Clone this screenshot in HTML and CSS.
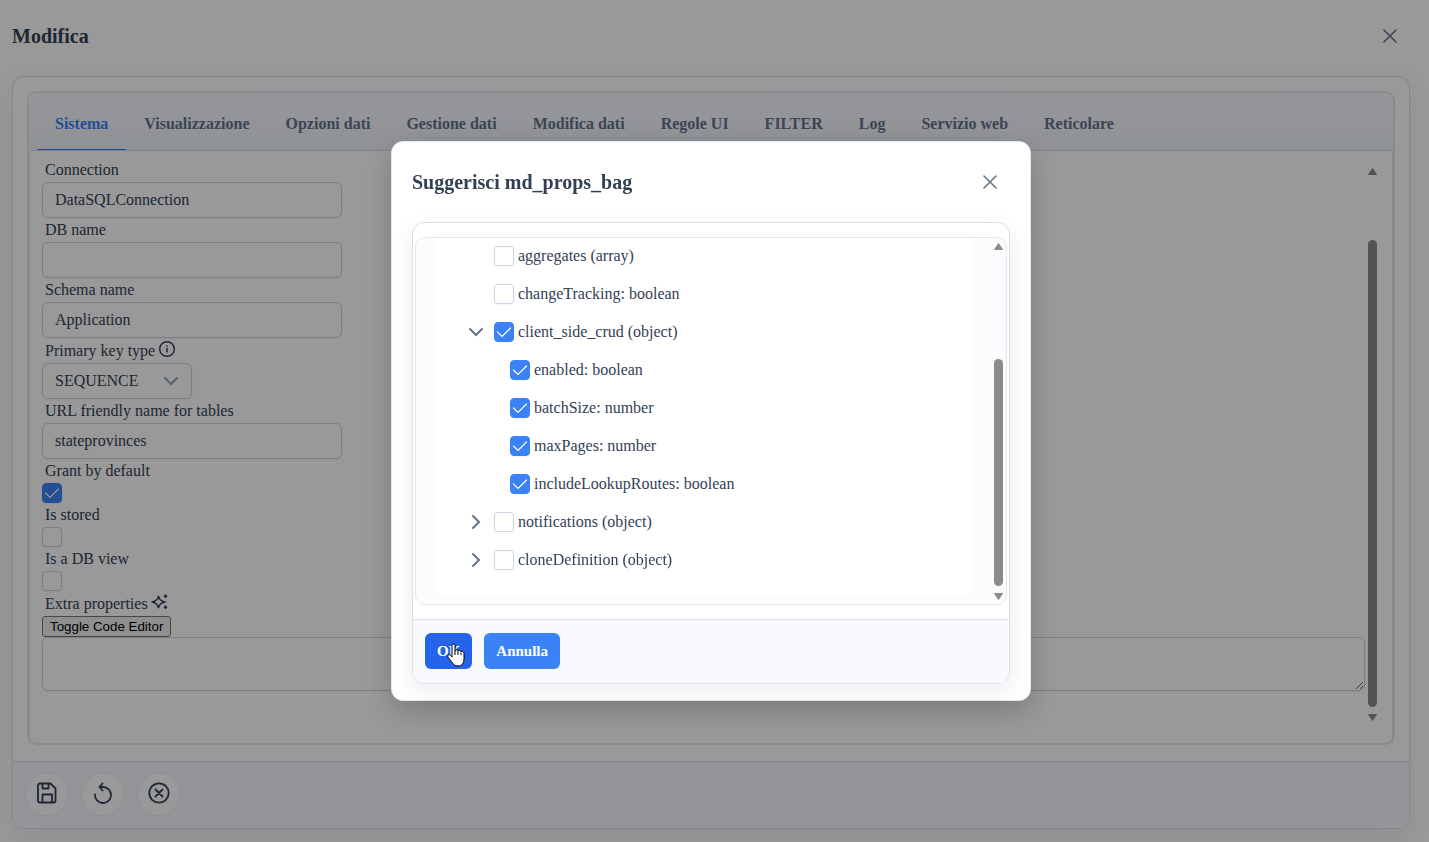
FILE: index.html
```html
<!DOCTYPE html>
<html lang="it">
  <head>
    <meta charset="UTF-8" />
    <title>Modifica</title>
    <link rel="stylesheet" href="styles.css">
  </head>
  <body>
    <div class="page">
      <header class="page-header">
        <h1>Modifica</h1>
        <button class="close-btn" aria-label="Chiudi">
          <svg width="14" height="14" viewBox="0 0 14 14"><path d="M1 1L13 13M13 1L1 13" /></svg>
        </button>
      </header>

      <main class="panel">
        <div class="panel-body">
          <div class="tabs">
            <nav class="tab-list">
              <a class="tab active" href="#sistema">Sistema</a>
              <a class="tab" href="#visualizzazione">Visualizzazione</a>
              <a class="tab" href="#opzioni">Opzioni dati</a>
              <a class="tab" href="#gestione">Gestione dati</a>
              <a class="tab" href="#modifica">Modifica dati</a>
              <a class="tab" href="#regole">Regole UI</a>
              <a class="tab" href="#filter">FILTER</a>
              <a class="tab" href="#log">Log</a>
              <a class="tab" href="#servizio">Servizio web</a>
              <a class="tab" href="#reticolare">Reticolare</a>
            </nav>

            <div class="tab-content">
              <form class="fields">
                <label for="connection">Connection</label>
                <input id="connection" class="text-input" type="text" value="DataSQLConnection" />

                <label for="db-name">DB name</label>
                <input id="db-name" class="text-input" type="text" />

                <label for="schema-name">Schema name</label>
                <input id="schema-name" class="text-input" type="text" value="Application" />

                <label class="with-icon" for="pk-type">
                  Primary key type
                  <svg width="18" height="18" viewBox="0 0 18 18"><circle cx="9" cy="9" r="7.3" /><path d="M9 8V12.500M9 5.500V6.800" /></svg>
                </label>
                <select id="pk-type" class="select">
                  <option>SEQUENCE</option>
                </select>

                <label for="url-name">URL friendly name for tables</label>
                <input id="url-name" class="text-input" type="text" value="stateprovinces" />

                <label for="grant">Grant by default</label>
                <input id="grant" class="checkbox" type="checkbox" checked />

                <label for="stored">Is stored</label>
                <input id="stored" class="checkbox" type="checkbox" />

                <label for="db-view">Is a DB view</label>
                <input id="db-view" class="checkbox" type="checkbox" />

                <label class="with-icon" for="extra">
                  Extra properties
                  <svg width="18" height="18" viewBox="0 0 18 18"><path d="M7.500 3C8.200 6.600 9.400 7.800 13.500 9C9.400 10.200 8.200 11.400 7.500 15C6.800 11.400 5.600 10.200 1.500 9C5.600 7.800 6.800 6.600 7.500 3ZM14.500 1.500V5M12.800 3.200H16.200M14.500 12.500V16M12.800 14.200H16.200" /></svg>
                </label>
                <button class="toggle-btn" type="button">Toggle Code Editor</button>
                <textarea id="extra" class="extra"></textarea>
              </form>

              <div class="scrollbar">
                <svg width="9" height="7" viewBox="0 0 9 7"><path d="M4.5 0.5L8.5 6.5H0.5Z" /></svg>
                <div class="track"><div class="thumb thumb-page"></div></div>
                <svg width="9" height="7" viewBox="0 0 9 7"><path d="M4.5 6.5L8.5 0.5H0.5Z" /></svg>
              </div>
            </div>
          </div>
        </div>

        <footer class="panel-footer">
          <button class="round-btn" aria-label="Salva">
            <svg width="22" height="22" viewBox="0 0 22 22"><path d="M4 1.500H14.500L19.500 6.500V18.500Q19.500 20.500 17.500 20.500H4Q2 20.500 2 18.500V3.500Q2 1.500 4 1.500ZM6.500 1.500V6.500H12.500V1.500M6.500 20.500V12.500H16V20.500" /></svg>
          </button>
          <button class="round-btn" aria-label="Ripristina">
            <svg width="22" height="22" viewBox="0 0 22 22"><path d="M3 12.500A8 8 0 1 0 11 5H7.500M10.500 1.500L7.500 5L10.500 8.500" /></svg>
          </button>
          <button class="round-btn" aria-label="Annulla modifiche">
            <svg width="22" height="22" viewBox="0 0 22 22"><circle cx="11" cy="11" r="9.700" /><path d="M7.500 7.500L14.500 14.500M14.500 7.500L7.500 14.500" /></svg>
          </button>
        </footer>
      </main>
    </div>

    <div class="overlay">
      <section class="dialog" role="dialog" aria-labelledby="dialog-title">
        <header class="dialog-header">
          <h2 id="dialog-title">Suggerisci md_props_bag</h2>
          <button class="close-btn" aria-label="Chiudi">
            <svg width="14" height="14" viewBox="0 0 14 14"><path d="M1 1L13 13M13 1L1 13" /></svg>
          </button>
        </header>

        <div class="dialog-panel">
          <div class="tree-box">
            <ul class="tree">
              <li><span class="toggler"></span><input id="n1" class="checkbox" type="checkbox" /><label for="n1">aggregates (array)</label></li>
              <li><span class="toggler"></span><input id="n2" class="checkbox" type="checkbox" /><label for="n2">changeTracking: boolean</label></li>
              <li>
                <button class="toggler" aria-label="Comprimi"><svg width="16" height="16" viewBox="0 0 16 16"><path d="M2 5L8 11L14 5" /></svg></button>
                <input id="n3" class="checkbox" type="checkbox" checked /><label for="n3">client_side_crud (object)</label>
              </li>
              <li class="child"><input id="n4" class="checkbox" type="checkbox" checked /><label for="n4">enabled: boolean</label></li>
              <li class="child"><input id="n5" class="checkbox" type="checkbox" checked /><label for="n5">batchSize: number</label></li>
              <li class="child"><input id="n6" class="checkbox" type="checkbox" checked /><label for="n6">maxPages: number</label></li>
              <li class="child"><input id="n7" class="checkbox" type="checkbox" checked /><label for="n7">includeLookupRoutes: boolean</label></li>
              <li>
                <button class="toggler" aria-label="Espandi"><svg width="16" height="16" viewBox="0 0 16 16"><path d="M5 2L11 8L5 14" /></svg></button>
                <input id="n8" class="checkbox" type="checkbox" /><label for="n8">notifications (object)</label>
              </li>
              <li>
                <button class="toggler" aria-label="Espandi"><svg width="16" height="16" viewBox="0 0 16 16"><path d="M5 2L11 8L5 14" /></svg></button>
                <input id="n9" class="checkbox" type="checkbox" /><label for="n9">cloneDefinition (object)</label>
              </li>
            </ul>

            <div class="scrollbar">
              <svg width="9" height="7" viewBox="0 0 9 7"><path d="M4.5 0.5L8.5 6.5H0.5Z" /></svg>
              <div class="track"><div class="thumb thumb-tree"></div></div>
              <svg width="9" height="7" viewBox="0 0 9 7"><path d="M4.5 6.5L8.5 0.5H0.5Z" /></svg>
            </div>
          </div>

          <footer class="dialog-footer">
            <button class="btn btn-hover">OK
              <svg class="pointer" width="18" height="24" viewBox="0 0 18 24"><path d="M5 14V2.500C5 0.500 8 0.500 8 2.500V8C8 6.300 11 6.300 11 8.300C11 6.800 14 7 14 9C14 7.800 17 8 17 10.200V15.500C17 20 15 23 11 23C7.500 23 6 21 4.500 18.500L1 14.200C0 12 2.500 10.800 3.800 12.500Z" /><path d="M8 8V12M11 8.500V12M14 9.500V12" /></svg>
            </button>
            <button class="btn">Annulla</button>
          </footer>
        </div>
      </section>
    </div>
  </body>
</html>
```

FILE: styles.css
```css
* {
  box-sizing: border-box;
}
body {
  margin: 0;
  font-family: "Liberation Serif", "Times New Roman", serif;
  font-size: 16px;
  color: #334155;
  background: #fff;
}
input,
select,
textarea,
.btn {
  font-family: inherit;
  font-size: 16px;
  color: inherit;
}
h1,
h2 {
  margin: 0;
}
svg {
  fill: none;
  stroke: currentColor;
}

/* page */
.page {
  display: flex;
  flex-direction: column;
  min-height: 100vh;
  padding: 0 19px 13px 12px;
}
.page-header {
  display: flex;
  align-items: center;
  justify-content: space-between;
  height: 76px;
  padding: 0 12px 4px 0;
}
.page-header h1,
.dialog-header h2 {
  font-size: 20px;
}
.close-btn {
  display: flex;
  padding: 1px;
  border: 0;
  background: none;
  color: #64748b;
}
.close-btn svg {
  stroke-width: 1.6;
  stroke-linecap: round;
}
.panel {
  flex: 1;
  display: flex;
  flex-direction: column;
  border: 1px solid #d9dfec;
  border-radius: 12px;
  box-shadow: 0 8px 24px rgba(0, 20, 10, 0.08);
}
.panel-body {
  flex: 1;
  display: flex;
  padding: 14px 14px 16px;
}
.tabs {
  flex: 1;
  display: flex;
  flex-direction: column;
  border: 2px solid #e2e8f0;
  border-radius: 10px;
}
.tab-list {
  display: flex;
  height: 58px;
  padding: 0 8px;
  border-bottom: 1px solid #d3dae8;
  border-radius: 8px 8px 0 0;
  background: linear-gradient(#fafbff, #f0f4fa);
}
.tab {
  display: flex;
  align-items: center;
  padding: 6px 18px 0;
  border-bottom: 1px solid transparent;
  color: #64748b;
  font-weight: bold;
  text-decoration: none;
}
.tab.active {
  color: #3b82f6;
  border-color: #3b82f6;
}
.tab-content {
  flex: 1;
  display: flex;
  justify-content: space-between;
  padding: 7px 15px 0 12px;
  border: solid #e2e8f0;
  border-width: 0 1px;
}
.fields {
  flex: 1;
  display: flex;
  flex-direction: column;
  align-items: flex-start;
}
.fields label {
  height: 24px;
  padding-left: 3px;
  line-height: 24px;
}
.fields label.with-icon {
  display: flex;
  gap: 3px;
  height: 25px;
  line-height: 26px;
}
.with-icon svg {
  margin-top: 2px;
  stroke-width: 1.5;
}
.text-input,
.select,
.extra {
  width: 300px;
  height: 36px;
  padding: 0 12px;
  border: 1px solid #cbd5e1;
  border-radius: 6px;
  background: #fff;
  box-shadow: 0 1px 2px rgba(18, 18, 23, 0.05);
}
.select {
  appearance: none;
  width: 150px;
  padding-bottom: 1px;
  background: #fff url("data:image/svg+xml,%3Csvg xmlns='http://www.w3.org/2000/svg' width='16' height='16' fill='none' stroke='%2394a3b8' stroke-width='2' stroke-linecap='round'%3E%3Cpath d='M2 5L8 11L14 5'/%3E%3C/svg%3E") no-repeat right 12px center;
}
.toggle-btn {
  height: 21px;
  padding: 0 7px;
  font-family: "Liberation Sans", Arial, sans-serif;
  border: 1px solid #767676;
  border-radius: 3px;
  background: #efefef;
  color: #000;
}
.extra {
  width: 100%;
  height: 54px;
}
.checkbox {
  appearance: none;
  flex: none;
  width: 20px;
  height: 20px;
  margin: 0;
  border: 1px solid #cbd5e1;
  border-radius: 4px;
  background: #fff;
  box-shadow: 0 1px 2px rgba(18, 18, 23, 0.05);
}
.checkbox:checked {
  border-color: #3b82f6;
  background: #3b82f6 url("data:image/svg+xml,%3Csvg xmlns='http://www.w3.org/2000/svg' width='18' height='18' fill='none' stroke='white' stroke-width='1.2' stroke-linecap='round'%3E%3Cpath d='M2.500 9L7 13.500L15.500 5'/%3E%3C/svg%3E") no-repeat center;
}
.panel-footer {
  display: flex;
  align-items: center;
  gap: 12px;
  height: 67px;
  padding: 0 12px 2px;
  border-top: 1px solid #d3dae8;
  border-radius: 0 0 11px 11px;
  background: #f5f8fd;
}
.round-btn {
  display: flex;
  align-items: center;
  justify-content: center;
  width: 44px;
  height: 44px;
  padding: 0 0 2px;
  border: 1px solid #e9edf5;
  border-radius: 50%;
  background: #fff;
  color: #334155;
}
.round-btn svg {
  stroke-width: 1.8;
  stroke-linecap: round;
  stroke-linejoin: round;
}

/* scrollbars */
.scrollbar {
  display: flex;
  flex-direction: column;
  gap: 7px;
  width: 9px;
}
.scrollbar svg {
  fill: #8b8b8b;
  stroke: #8b8b8b;
  stroke-linejoin: round;
}
.track {
  flex: 1;
  display: flex;
  flex-direction: column;
  justify-content: flex-end;
}
.thumb {
  border-radius: 5px;
  background: #8b8b8b;
}
.thumb-page {
  height: 89%;
}
.thumb-tree {
  height: 69%;
}
.tab-content .scrollbar {
  margin: 10px 0 22px 3px;
}

/* dialog */
.overlay {
  position: fixed;
  inset: 0;
  display: flex;
  align-items: center;
  justify-content: center;
  padding-right: 7px;
  background: rgba(0, 0, 0, 0.4);
}
.dialog {
  width: 640px;
  padding: 0 20px 16px;
  border: 1px solid #e2e8f0;
  border-radius: 12px;
  background: #fff;
  box-shadow: 0 10px 30px rgba(0, 0, 0, 0.2);
}
.dialog-header {
  display: flex;
  align-items: center;
  justify-content: space-between;
  height: 80px;
  padding-right: 12px;
}
.dialog-panel {
  border: 1px solid #d9dfec;
  border-radius: 12px;
  box-shadow: 0 8px 24px rgba(0, 20, 10, 0.08);
}
.tree-box {
  display: flex;
  justify-content: space-between;
  margin: 14px 2px;
  padding: 0 3px 10px 22px;
  border: 1px solid #e2e8f0;
  border-radius: 10px;
  background: #fbfcfe;
}
.tree {
  flex: 1;
  margin: 0 24px 0 0;
  padding: 0 0 14px 24px;
  list-style: none;
  background: #fff;
}
.tree li {
  display: flex;
  align-items: center;
  gap: 4px;
  height: 38px;
  padding-bottom: 2px;
}
.tree li.child {
  padding-left: 48px;
}
.toggler {
  display: flex;
  align-items: center;
  justify-content: center;
  width: 28px;
  height: 28px;
  padding: 0;
  border: 0;
  background: none;
  color: #64748b;
}
.toggler svg {
  stroke-width: 2;
  stroke-linecap: round;
}
.tree-box .scrollbar {
  margin: 5px 0 -6px;
}
.dialog-footer {
  display: flex;
  gap: 12px;
  padding: 13px 12px 14px;
  border-top: 1px solid #d9dfec;
  border-radius: 0 0 11px 11px;
  background: #f8fafd;
}
.btn {
  position: relative;
  height: 36px;
  padding: 0 12px;
  border: 0;
  border-radius: 6px;
  background: #3b82f6;
  color: #fff;
  font-size: 15px;
  font-weight: bold;
}
.btn-hover {
  background: #2563eb;
}
/* hand pointer over the hovered button */
.pointer {
  position: absolute;
  left: 22px;
  top: 10px;
  fill: #fff;
  stroke: #000;
}
```
